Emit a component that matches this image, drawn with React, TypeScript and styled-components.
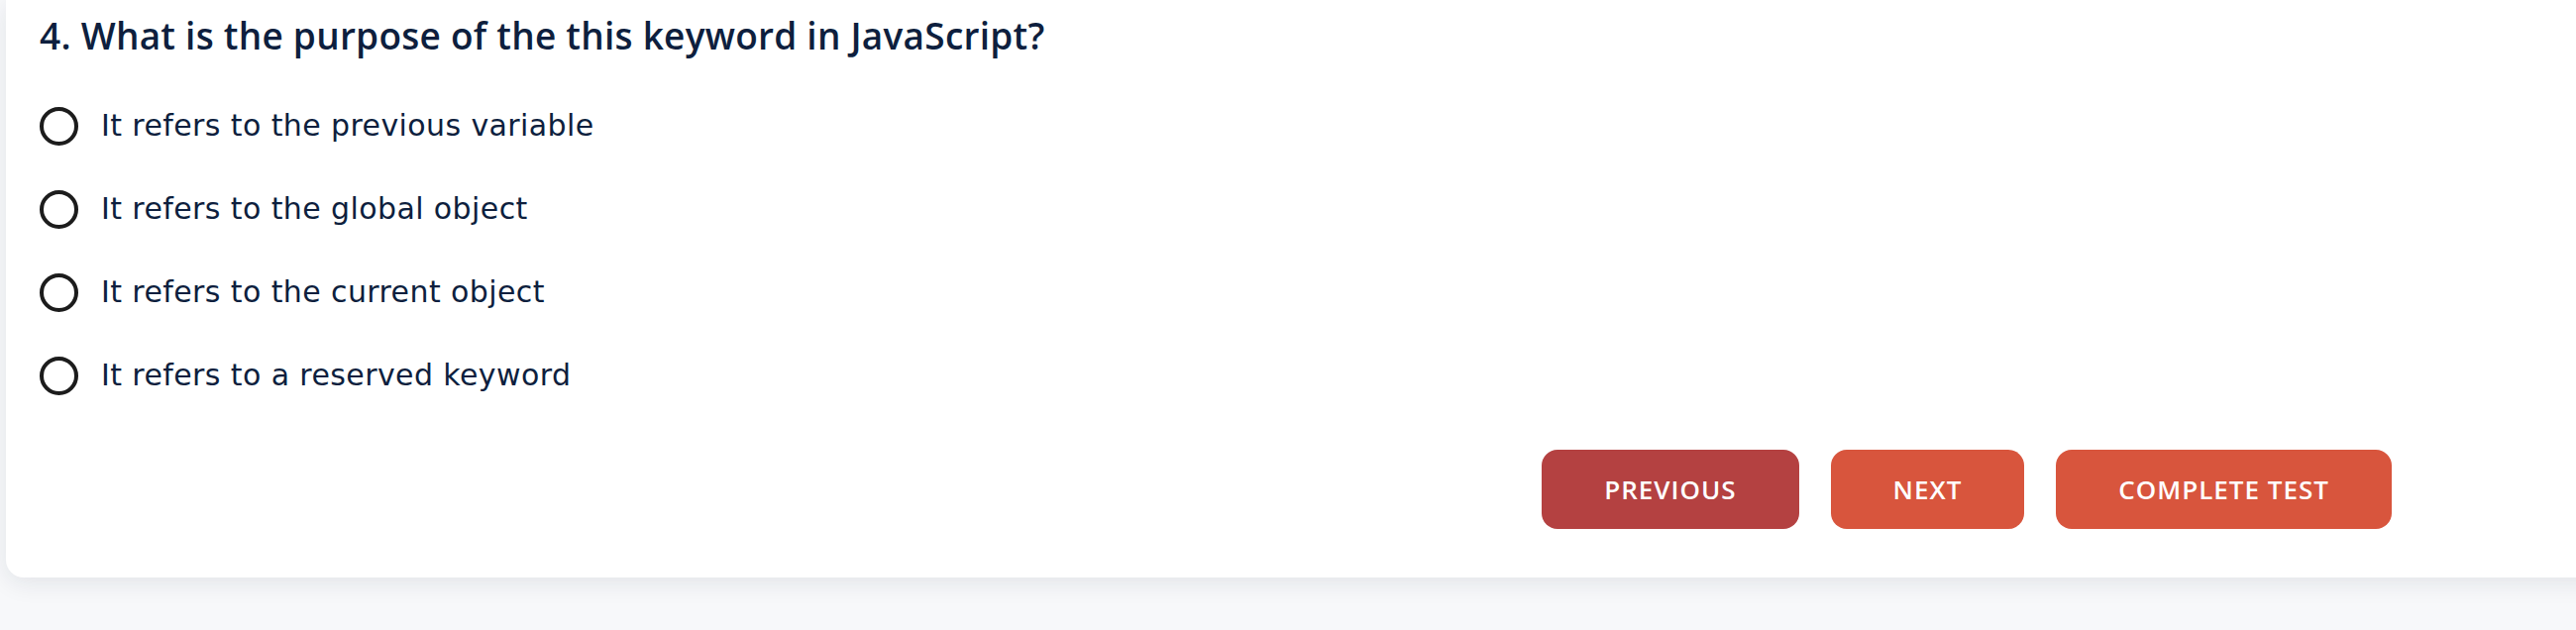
import styled, { createGlobalStyle } from 'styled-components'

const OPTIONS = [
  'It refers to the previous variable',
  'It refers to the global object',
  'It refers to the current object',
  'It refers to a reserved keyword'
]

const GlobalStyle = createGlobalStyle`
  body {
    margin: 0;
    background: #f7f8fa;
    overflow: hidden;
    font-family: "Open Sans", "DejaVu Sans", sans-serif;
  }
`

const App = () => {
  return (
    <Page>
      <GlobalStyle />
      <Card>
        <Question>4. What is the purpose of the this keyword in JavaScript?</Question>
        <Options>
          {OPTIONS.map((text) => (
            <Option key={text}>
              <Radio type="radio" name="q4" />
              <span>{text}</span>
            </Option>
          ))}
        </Options>
        <Actions>
          <Button variant="dark">PREVIOUS</Button>
          <Button>NEXT</Button>
          <Button>COMPLETE TEST</Button>
        </Actions>
      </Card>
    </Page>
  )
}

const Page = styled.div`
  padding: 0 0 0 6px;
  height: 636px;
`

const Card = styled.div`
  margin-right: -40px;
  padding: 12px 226px 49px 34px;
  background: #fff;
  border-radius: 0 0 18px 18px;
  box-shadow: 0 6px 24px rgba(20, 30, 60, 0.09);
`

const Question = styled.h2`
  margin: 0;
  font-size: 37px;
  font-weight: 600;
  letter-spacing: 0.25px;
  line-height: 48px;
  color: #0e1f3e;
`

const Options = styled.div`
  display: flex;
  flex-direction: column;
  gap: 42px;
  margin-top: 46px;
`

const Option = styled.label`
  display: flex;
  align-items: center;
  gap: 23px;
  font-family: "DejaVu Sans", "Open Sans", sans-serif;
  font-size: 30px;
  letter-spacing: 0.4px;
  line-height: 42px;
  color: #0e1f3e;
  cursor: pointer;
`

const Radio = styled.input`
  appearance: none;
  margin: 0;
  width: 39px;
  height: 39px;
  border: 4px solid #1c1c1c;
  border-radius: 50%;
  box-sizing: border-box;
  flex-shrink: 0;
`

const Actions = styled.div`
  display: flex;
  justify-content: flex-end;
  gap: 32px;
  margin-top: 54px;
`

const Button = styled.button<{ variant?: 'dark' }>`
  height: 80px;
  padding: 0 63px;
  border: none;
  border-radius: 16px;
  background: ${({ variant }) => (variant === 'dark' ? '#b44141' : '#d8553d')};
  color: #fff;
  font-family: "Open Sans", "DejaVu Sans", sans-serif;
  font-size: 26px;
  font-weight: 600;
  letter-spacing: 1px;
  cursor: pointer;
`

export default App
